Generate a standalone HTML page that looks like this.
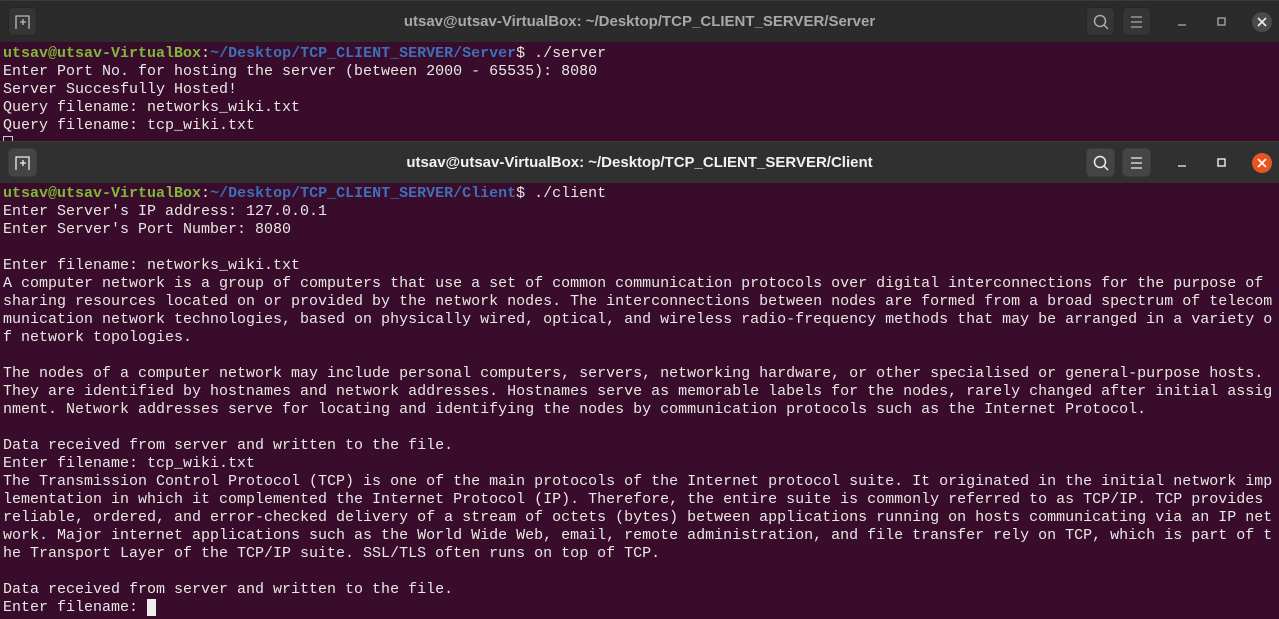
<!DOCTYPE html>
<html><head><meta charset="utf-8"><style>
body{margin:0;width:1279px;height:619px;overflow:hidden;background:#2c2c2c;font-family:"Liberation Sans",sans-serif;position:relative}
.tb{position:absolute;left:0;width:1279px;height:41px;background:#2b2b2b;border-top:1px solid #3a3a3a}
.tb.active{background:#303030}
.title{position:absolute;left:0;right:0;top:12px;text-align:center;color:#a8a8a8;font-size:15px;font-weight:bold}
.active .title{color:#f2f2f2}
.btn{position:absolute;top:6px;width:29px;height:29px;border-radius:5px;background:#353535;border:1px solid #262626;box-sizing:border-box}
.active .btn{background:#454545;border-color:#3b3b3b}
.term{position:absolute;left:0;width:1279px;background:#380c2a;color:#e8e8e4;font-family:"Liberation Mono",monospace;font-size:15px;line-height:18px;white-space:pre;padding-left:3px;box-sizing:border-box}
.g{color:#7fb83a;font-weight:bold}.b{color:#3f6fb6;font-weight:bold}
.cur{display:inline-block;width:9px;height:17px;background:#eee;vertical-align:top}
svg{position:absolute}
</style></head><body>
<div class="tb" style="top:0">
 <div class="btn" style="left:8px"></div>
 <svg style="left:14px;top:12px" width="18" height="18" viewBox="0 0 18 18"><path d="M2 16V3h13v13M6 9h6M9 6v6" stroke="#bbb" fill="none" stroke-width="1.3"/></svg>
 <div class="title">utsav@utsav-VirtualBox: ~/Desktop/TCP_CLIENT_SERVER/Server</div>
 <div class="btn" style="left:1086px"></div><div class="btn" style="left:1122px"></div>
 <svg style="left:1092px;top:12px" width="18" height="18"><circle cx="8" cy="8" r="5.5" stroke="#aaa" fill="none" stroke-width="1.5"/><path d="M12 12l4 4" stroke="#aaa" stroke-width="1.5"/></svg>
 <svg style="left:1128px;top:12px" width="18" height="18"><path d="M3 4h11M3 9h11M3 14h11" stroke="#aaa" stroke-width="1.3"/></svg>
 <svg style="left:1174px;top:12px" width="18" height="18"><path d="M4 12h8" stroke="#aaa" stroke-width="1.3"/></svg>
 <svg style="left:1213px;top:12px" width="18" height="18"><rect x="5" y="5" width="7" height="7" stroke="#aaa" fill="none" stroke-width="1.3"/></svg>
 <svg style="left:1250px;top:9px" width="24" height="24"><circle cx="12" cy="12" r="10" fill="#4a4a4a"/><path d="M8 8l8 8M16 8l-8 8" stroke="#eee" stroke-width="1.6"/></svg>
</div>
<div class="term" style="top:42px;height:99px;padding-top:3px"><span class="g">utsav@utsav-VirtualBox</span>:<span class="b">~/Desktop/TCP_CLIENT_SERVER/Server</span>$ ./server
Enter Port No. for hosting the server (between 2000 - 65535): 8080
Server Succesfully Hosted!
Query filename: networks_wiki.txt
Query filename: tcp_wiki.txt
<span style="display:inline-block;width:8px;height:10px;border:1px solid #ccc;border-bottom:none"></span></div>
<div class="tb active" style="top:141px">
 <div class="btn" style="left:8px"></div>
 <svg style="left:14px;top:12px" width="18" height="18" viewBox="0 0 18 18"><path d="M2 16V3h13v13M6 9h6M9 6v6" stroke="#eee" fill="none" stroke-width="1.3"/></svg>
 <div class="title">utsav@utsav-VirtualBox: ~/Desktop/TCP_CLIENT_SERVER/Client</div>
 <div class="btn" style="left:1086px"></div><div class="btn" style="left:1122px"></div>
 <svg style="left:1092px;top:12px" width="18" height="18"><circle cx="8" cy="8" r="5.5" stroke="#eee" fill="none" stroke-width="1.5"/><path d="M12 12l4 4" stroke="#eee" stroke-width="1.5"/></svg>
 <svg style="left:1128px;top:12px" width="18" height="18"><path d="M3 4h11M3 9h11M3 14h11" stroke="#eee" stroke-width="1.3"/></svg>
 <svg style="left:1174px;top:12px" width="18" height="18"><path d="M4 12h8" stroke="#eee" stroke-width="1.3"/></svg>
 <svg style="left:1213px;top:12px" width="18" height="18"><rect x="5" y="5" width="7" height="7" stroke="#eee" fill="none" stroke-width="1.4"/></svg>
 <svg style="left:1250px;top:9px" width="24" height="24"><circle cx="12" cy="12" r="10" fill="#e95420"/><path d="M8 8l8 8M16 8l-8 8" stroke="#fff" stroke-width="1.6"/></svg>
</div>
<div class="term" style="top:183px;height:436px;padding-top:2px"><span class="g">utsav@utsav-VirtualBox</span>:<span class="b">~/Desktop/TCP_CLIENT_SERVER/Client</span>$ ./client
Enter Server's IP address: 127.0.0.1
Enter Server's Port Number: 8080

Enter filename: networks_wiki.txt
A computer network is a group of computers that use a set of common communication protocols over digital interconnections for the purpose of
sharing resources located on or provided by the network nodes. The interconnections between nodes are formed from a broad spectrum of telecom
munication network technologies, based on physically wired, optical, and wireless radio-frequency methods that may be arranged in a variety o
f network topologies.

The nodes of a computer network may include personal computers, servers, networking hardware, or other specialised or general-purpose hosts.
They are identified by hostnames and network addresses. Hostnames serve as memorable labels for the nodes, rarely changed after initial assig
nment. Network addresses serve for locating and identifying the nodes by communication protocols such as the Internet Protocol.

Data received from server and written to the file.
Enter filename: tcp_wiki.txt
The Transmission Control Protocol (TCP) is one of the main protocols of the Internet protocol suite. It originated in the initial network imp
lementation in which it complemented the Internet Protocol (IP). Therefore, the entire suite is commonly referred to as TCP/IP. TCP provides
reliable, ordered, and error-checked delivery of a stream of octets (bytes) between applications running on hosts communicating via an IP net
work. Major internet applications such as the World Wide Web, email, remote administration, and file transfer rely on TCP, which is part of t
he Transport Layer of the TCP/IP suite. SSL/TLS often runs on top of TCP.

Data received from server and written to the file.
Enter filename: <span class="cur"></span></div>
</body></html>
